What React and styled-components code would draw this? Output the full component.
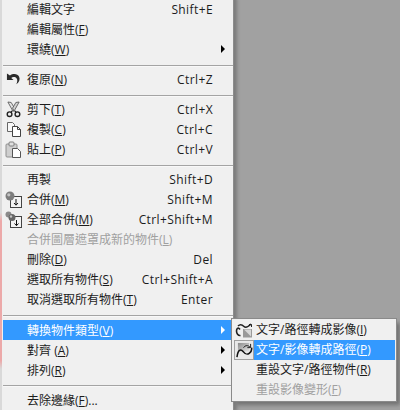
import React from "react";
import styled, { createGlobalStyle } from "styled-components";

const Global = createGlobalStyle`
  html, body { margin: 0; padding: 0; width: 400px; height: 410px; overflow: hidden; background: #a1a1a1; }
`;

const Stage = styled.div`
  position: relative;
  width: 400px;
  height: 410px;
  overflow: hidden;
  background: #a1a1a1;
  font-family: "Open Sans", "Noto Sans CJK TC", sans-serif;
  font-size: 12px;
  color: #1c1c1c;
`;

const Menu = styled.div`
  width: 234px;
  height: 411px;
  margin-top: -1px;
  box-sizing: border-box;
  padding-left: 3px;
  display: flex;
  flex-direction: column;
  background:
    linear-gradient(#d9d9d9 0 52%, #eca9a9 54%, #eca9a9 88%, #d9d9d9 90%) left / 2px 100% no-repeat,
    #f0f0f0;
  border-right: 1px solid #8c8c8c;
  box-shadow: 2px 0 3px 1px #7c7c7c;
`;

const RowBox = styled.div`
  height: 20px;
  flex: none;
  display: flex;
  align-items: center;
  margin-right: 2px;
  background: ${(p) => (p.$active ? "#3399ff" : "transparent")};
  color: ${(p) => (p.$active ? "#fff" : p.$disabled ? "#a0a0a0" : "#1c1c1c")};
`;

const IconSlot = styled.span`
  width: 21px;
  height: 20px;
  margin-right: 3px;
  flex: none;
  display: flex;
  align-items: center;
  justify-content: center;
`;

const Label = styled.span`
  flex: 1;
  white-space: nowrap;
  u { text-underline-offset: 1px; }
`;

const Shortcut = styled.span`
  margin-right: 18px;
  white-space: nowrap;
  letter-spacing: 0.4px;
`;

const Arrow = styled.span`
  width: 0;
  height: 0;
  margin-right: 6px;
  border-left: 4px solid ${(p) => (p.$active ? "#fff" : "#000")};
  border-top: 4px solid transparent;
  border-bottom: 4px solid transparent;
`;

const Rule = styled.div`
  flex: none;
  height: 1px;
  margin: ${(p) => p.$m || "6px 0 2px"};
  background: #a4a4a4;
  border-bottom: 1px solid #f8f8f8;
`;

const Sub = styled.div`
  position: absolute;
  left: 231px;
  top: 318px;
  width: 166px;
  height: 84px;
  box-sizing: border-box;
  padding: 1px 1px 0 2px;
  background: #f0f0f0;
  border: 1px solid #8a8a8a;
  box-shadow: 4px 4px 4px -1px #727272;
`;

const SubRow = styled.div`
  height: 20px;
  display: flex;
  align-items: center;
  color: ${(p) => (p.$disabled ? "#a0a0a0" : "#1c1c1c")};
`;

const SubIcon = styled.span`
  width: 20px;
  height: 20px;
  flex: none;
  box-sizing: border-box;
  display: flex;
  align-items: center;
  justify-content: center;
  background: ${(p) => (p.$checked ? "#e9e9e9" : "transparent")};
  border: 1px solid ${(p) => (p.$checked ? "#a0a0a0" : "transparent")};
`;

const SubLabel = styled.span`
  flex: 1;
  height: 20px;
  line-height: 20px;
  padding-left: 2px;
  white-space: nowrap;
  background: ${(p) => (p.$active ? "#3399ff" : "transparent")};
  color: ${(p) => (p.$active ? "#fff" : "inherit")};
`;

const Undo = () => (
  <svg width="15" height="14" viewBox="0 0 16 14">
    <path d="M1 1v7h7L5.600 5.800C7 4.600 10 4.600 11.400 6.400c.9 1.300.9 3.300-.4 6.100 3-2 4.300-5 3-8C12.500 1.200 7.500.8 4.200 3.200L1 1z" fill="#2a2a2a" />
  </svg>
);
const Scissors = () => (
  <svg width="15" height="17" viewBox="0 0 16 17">
    <path d="M2 .5l3.500.5L9 7l-1.500 3.500z" fill="#e4e4e4" stroke="#555" strokeWidth=".9" />
    <path d="M14 .5L10.500 1 7 7l1.500 3.500z" fill="#d0d0d0" stroke="#555" strokeWidth=".9" />
    <path d="M6.500 10l-1 1.200M9.500 10l1 1.200" stroke="#222" strokeWidth="1.400" />
    <circle cx="3.800" cy="13.500" r="2.500" fill="none" stroke="#222" strokeWidth="1.500" />
    <circle cx="12.200" cy="13.500" r="2.500" fill="none" stroke="#222" strokeWidth="1.500" />
  </svg>
);
const Copy = () => (
  <svg width="16" height="16" viewBox="0 0 16 16">
    <path d="M1.500 1.500h5l2 2v7h-7z" fill="#f8f8f8" stroke="#666" />
    <path d="M6.500 5.500h5l3 3v7h-8z" fill="#fff" stroke="#444" />
    <path d="M11.500 5.500v3h3" fill="none" stroke="#444" />
  </svg>
);
const Paste = () => (
  <svg width="17" height="17" viewBox="0 0 17 17">
    <rect x="1" y="3" width="11" height="13" rx="1" fill="#cfcfcf" stroke="#909090" />
    <rect x="4" y="1" width="5" height="4" rx="1" fill="#e0e0e0" stroke="#808080" />
    <path d="M7.500 7.500h5l3 3v6h-8z" fill="#fff" stroke="#555" />
  </svg>
);
const Merge = () => (
  <svg width="17" height="17" viewBox="0 0 17 17">
    <rect x="5.500" y="5.500" width="11" height="11" fill="#f4f4f4" stroke="#444" />
    <circle cx="5" cy="5" r="4.500" fill="#7d7d7d" />
    <circle cx="3.800" cy="3.800" r="1.600" fill="#c4c4c4" />
    <path d="M11 8v6M9 12l2 2.200 2-2.200" fill="none" stroke="#111" />
  </svg>
);
const MergeAll = () => (
  <svg width="17" height="17" viewBox="0 0 17 17">
    <rect x="5.500" y="5.500" width="11" height="11" fill="#f4f4f4" stroke="#444" />
    <circle cx="3.500" cy="3.500" r="3" fill="#8a8a8a" />
    <circle cx="7" cy="6.500" r="3.500" fill="#666" />
    <circle cx="6" cy="5.500" r="1.200" fill="#c4c4c4" />
    <path d="M11.500 9v5.500M9.500 12.500l2 2.200 2-2.200" fill="none" stroke="#111" />
  </svg>
);
const ToImage = () => (
  <svg width="18" height="15" viewBox="0 0 18 15">
    <path d="M8 6h9v8.500H8z" fill="#9a9a9a" />
    <path d="M9 6.500l7 7V6.500z" fill="#d8d8d8" />
    <path d="M5 6.500C3 3.500 1.500 6 1.500 8s1.500 5 4 4.500" fill="none" stroke="#222" strokeWidth="1.600" />
    <path d="M3 3c2-2 4-1.500 6 .5s4 .5 7-2.500" fill="none" stroke="#222" strokeWidth="1.600" />
    <path d="M14 1.500h2.500V4" fill="none" stroke="#222" />
  </svg>
);
const ToPath = () => (
  <svg width="17" height="16" viewBox="0 0 18 17">
    <defs>
      <linearGradient id="toPathFill" x1="0" y1="0" x2="1" y2="1">
        <stop offset="0" stopColor="#8a8a8a" />
        <stop offset="1" stopColor="#e4e4e4" />
      </linearGradient>
    </defs>
    <path d="M2 1h12v9H2z" fill="url(#toPathFill)" />
    <path d="M1 16C2 8 5 7 7.500 10s4 4 6.500 2 3-4 2.500-6" fill="none" stroke="#111" strokeWidth="1.600" />
    <path d="M8 6c2-3 5-2.500 7-.5M15.500 2v4H12" fill="none" stroke="#111" />
  </svg>
);

const Row = ({ icon, label, u, after, shortcut, arrow, active, disabled }) => (
  <RowBox $active={active} $disabled={disabled}>
    <IconSlot>{icon}</IconSlot>
    <Label>
      {label}
      {u && (
        <>
          (<u>{u}</u>){after}
        </>
      )}
    </Label>
    {shortcut && <Shortcut>{shortcut}</Shortcut>}
    {arrow && <Arrow $active={active} />}
  </RowBox>
);

const SubItem = ({ icon, label, u, checked, active, disabled }) => (
  <SubRow $disabled={disabled}>
    <SubIcon $checked={checked}>{icon}</SubIcon>
    <SubLabel $active={active}>
      {label}(<u>{u}</u>)
    </SubLabel>
  </SubRow>
);

export default function App() {
  return (
    <Stage>
      <Global />
      <Menu>
        <Row label="編輯文字" shortcut="Shift+E" />
        <Row label="編輯屬性" u="F" />
        <Row label="環繞" u="W" arrow />
        <Rule />
        <Row icon={<Undo />} label="復原" u="N" shortcut="Ctrl+Z" />
        <Rule />
        <Row icon={<Scissors />} label="剪下" u="T" shortcut="Ctrl+X" />
        <Row icon={<Copy />} label="複製" u="C" shortcut="Ctrl+C" />
        <Row icon={<Paste />} label="貼上" u="P" shortcut="Ctrl+V" />
        <Rule />
        <Row label="再製" shortcut="Shift+D" />
        <Row icon={<Merge />} label="合併" u="M" shortcut="Shift+M" />
        <Row icon={<MergeAll />} label="全部合併" u="M" shortcut="Ctrl+Shift+M" />
        <Row label="合併圖層遮罩成新的物件" u="L" disabled />
        <Row label="刪除" u="D" shortcut="Del" />
        <Row label="選取所有物件" u="S" shortcut="Ctrl+Shift+A" />
        <Row label="取消選取所有物件" u="T" shortcut="Enter" />
        <Rule $m="6px 0 3px" />
        <Row label="轉換物件類型" u="V" arrow active />
        <Row label="對齊 " u="A" arrow />
        <Row label="排列" u="R" arrow />
        <Rule $m="5px 0 3px" />
        <Row label="去除邊緣" u="F" after="..." />
      </Menu>
      <Sub>
        <SubItem icon={<ToImage />} label="文字/路徑轉成影像" u="I" />
        <SubItem icon={<ToPath />} label="文字/影像轉成路徑" u="P" checked active />
        <SubItem label="重設文字/路徑物件" u="R" />
        <SubItem label="重設影像變形" u="F" disabled />
      </Sub>
    </Stage>
  );
}
